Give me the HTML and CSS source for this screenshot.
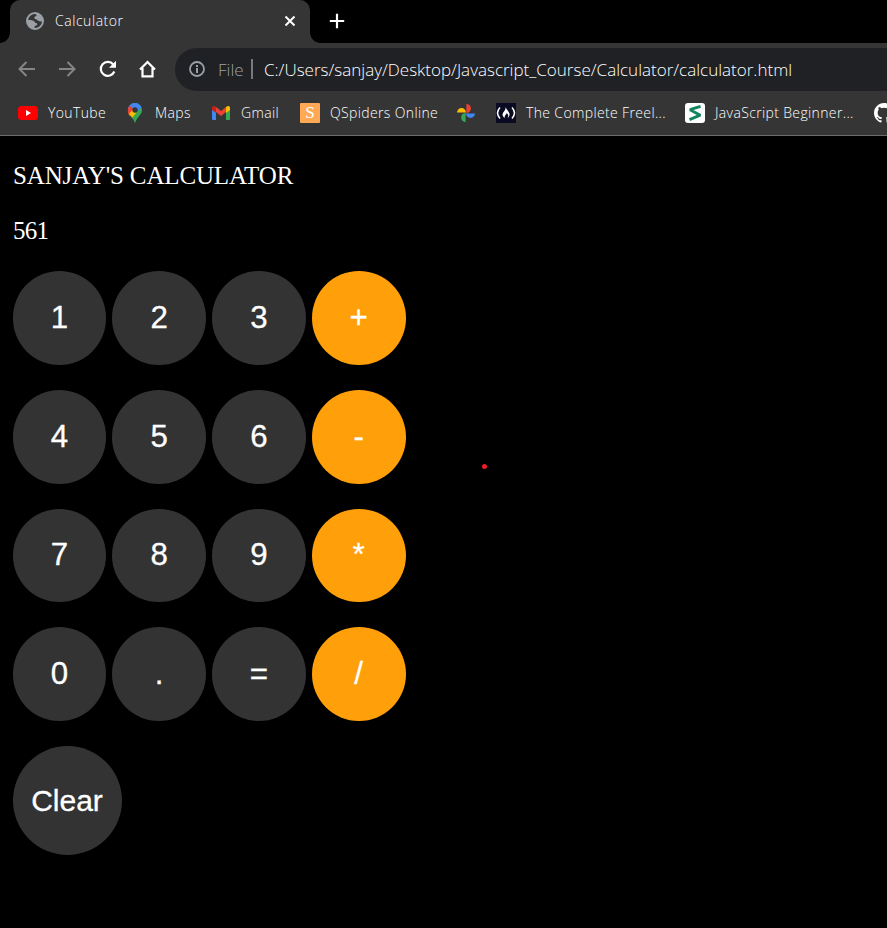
FILE: index.html
```html
<!DOCTYPE html>
<html lang="en">
<head>
<meta charset="utf-8">
<title>Calculator</title>
<link rel="stylesheet" href="styles.css">
</head>
<body>
<header class="browser">
  <div class="tabs">
    <div class="tab">
      <svg class="globe" viewBox="0 0 18 18"><circle cx="9" cy="9" r="8" fill="none" stroke="#9aa0a6" stroke-width="2"/><path d="M9 1.500C13 1.500 16.500 5 16.500 9c-1.500.8-3 .2-4.200-.2-1-.3-1.300-1.300-2.300-1.500-1.300-.2-2.200-.9-1.500-2.200.5-1 1.800-.6 2-1.600.1-.8-.9-1.200-1.500-2zM1.500 8.200c2-.4 4.500-.1 6 .6 1.600.8.9 2 2.500 2.200 1.500.2 1.700 1.600.6 2.300-.9.600-2 .5-2.100 1.700v1.600C4.500 16.500 1.500 13 1.500 8.200z" fill="#9aa0a6"/></svg>
      <span class="tab-title">Calculator</span>
      <svg class="close" viewBox="0 0 12 12"><path d="M1.500 1.500l9 9m0-9l-9 9" stroke="#fff" stroke-width="2" fill="none"/></svg>
    </div>
    <svg class="plus" viewBox="0 0 16 16"><path d="M8 .8v14.400M.8 8h14.400" stroke="#fff" stroke-width="2.200"/></svg>
  </div>
  <div class="toolbar">
    <svg class="nav" viewBox="0 0 20 20"><path d="M18 10H3M9.500 3L2.500 10l7 7" stroke="#858585" stroke-width="2" fill="none"/></svg>
    <svg class="nav" viewBox="0 0 20 20"><path d="M2 10h15M10.500 3l7 7-7 7" stroke="#858585" stroke-width="2" fill="none"/></svg>
    <svg class="nav" viewBox="0 0 20 20"><path d="M17.300 12.500A7 7 0 1 1 16.300 5.500" stroke="#fff" stroke-width="2.200" fill="none"/><path d="M19 1.800v7h-7z" fill="#fff"/></svg>
    <svg class="nav" viewBox="0 0 20 20"><path d="M3 10.500L10.500 3l7.500 7.500M5.500 9v8.400h10V9" stroke="#fff" stroke-width="2.200" fill="none"/></svg>
    <div class="address">
      <svg class="info" viewBox="0 0 16 16"><circle cx="8" cy="8" r="7" fill="none" stroke="#9aa0a6" stroke-width="1.800"/><path d="M8 7v5M8 4v2" stroke="#9aa0a6" stroke-width="2"/></svg>
      <span class="scheme">File</span>
      <span class="divider"></span>
      <span class="url">C:/Users/sanjay/Desktop/Javascript_Course/Calculator/calculator.html</span>
    </div>
  </div>
  <nav class="bookmarks">
    <div class="bm w-youtube"><svg viewBox="0 0 20 20"><rect y="3" width="20" height="14" rx="3.500" fill="#f00"/><path d="M8 7l5 3-5 3z" fill="#fff"/></svg><span>YouTube</span></div>
    <div class="bm w-maps"><svg viewBox="0 0 20 20"><path d="M10 0a7 7 0 0 1 7 7c0 5-4.500 6-7 13C8.500 15 3 12 3 7a7 7 0 0 1 7-7z" fill="#34a853"/><path d="M4.500 11.300l9-10.400A7 7 0 0 0 3 7c0 1.700.5 3 1.500 4.300z" fill="#4285f4"/><path d="M4.700 2.400L10 7l-5.500 6.200C2.300 9.500 2.200 5.500 4.700 2.400z" fill="#ea4335"/><path d="M4 10.800l4-4.600 3.500 3.500-4.300 5z" fill="#fbbc04"/><path d="M5 2.500a7 7 0 0 1 11.500 2L12 9 8 5z" fill="#4285f4"/><circle cx="10" cy="7" r="2.700" fill="#353535"/></svg><span>Maps</span></div>
    <div class="bm w-gmail"><svg viewBox="0 0 20 20"><path d="M1 5l4 3v9H2a1 1 0 0 1-1-1z" fill="#4285f4"/><path d="M19 5l-4 3v9h3a1 1 0 0 0 1-1z" fill="#34a853"/><path d="M5 4l5 4 5-4v5l-5 4-5-4z" fill="#ea4335"/><path d="M1 7V5c0-2 2-2.600 4-1v6z" fill="#c5221f"/><path d="M19 7V5c0-2-2-2.600-4-1v6z" fill="#fbbc04"/></svg><span>Gmail</span></div>
    <div class="bm w-qspiders"><b class="q-icon">S</b><span>QSpiders Online</span></div>
    <div class="bm"><svg viewBox="0 0 20 20"><path d="M10.400 1a4.500 4.500 0 0 1 0 9z" fill="#ea4335"/><path d="M19 10.400a4.500 4.500 0 0 1-9 0z" fill="#4285f4"/><path d="M9.600 19a4.500 4.500 0 0 1 0-9z" fill="#34a853"/><path d="M1 9.600a4.500 4.500 0 0 1 9 0z" fill="#fbbc04"/></svg></div>
    <div class="bm w-course"><svg viewBox="0 0 20 20"><path d="M0 0h20v20H0z" fill="#0a0a23"/><path d="M4 4.500Q-1 10 4 15.500M16 4.500q5 5.500 0 11" stroke="#fff" stroke-width="1.500" fill="none"/><path d="M9.500 4c1 3 4.500 5 4 8-.2 1.400-1 2.400-2 3 1.500-2.500.5-3.500-1-5 0 2-2.500 2.500-1.500 5-3.500-2-2.700-4.500-1-6.500C9 7 9.800 6 9.500 4z" fill="#fff"/></svg><span>The Complete Freel...</span></div>
    <div class="bm w-js"><svg viewBox="0 0 20 20"><rect width="20" height="20" rx="3" fill="#fff"/><path d="M15.500 3.300L5 6.700l10.300 5.500L4.500 16.700" stroke="#12835b" stroke-width="2.900" fill="none" stroke-linejoin="bevel"/></svg><span>JavaScript Beginner...</span></div>
    <div class="bm"><svg viewBox="0 0 16 16"><path fill="#fff" d="M8 0C3.580 0 0 3.580 0 8c0 3.540 2.290 6.530 5.470 7.590.4.070.55-.17.55-.38v-1.490c-2.010.37-2.530-.49-2.690-.94-.09-.23-.48-.94-.82-1.130-.28-.15-.68-.52-.01-.53.63-.01 1.080.58 1.230.82.72 1.210 1.870.87 2.330.66.070-.52.280-.87.510-1.070-1.780-.2-3.640-.89-3.640-3.950 0-.87.31-1.590.82-2.150-.08-.2-.36-1.020.08-2.120 0 0 .67-.21 2.200.82a7.600 7.600 0 0 1 4 0c1.530-1.040 2.200-.82 2.200-.82.44 1.100.16 1.920.08 2.120.51.56.82 1.270.82 2.150 0 3.070-1.870 3.750-3.650 3.950.29.25.54.73.54 1.480v2.200c0 .21.15.46.55.38A8 8 0 0 0 16 8c0-4.420-3.580-8-8-8z"/></svg></div>
  </nav>
</header>
<main class="page">
  <p class="heading">SANJAY'S CALCULATOR</p>
  <p class="result">561</p>
  <div class="keys">
    <button>1</button><button>2</button><button>3</button><button class="op">+</button>
    <button>4</button><button>5</button><button>6</button><button class="op">-</button>
    <button>7</button><button>8</button><button>9</button><button class="op">*</button>
    <button>0</button><button>.</button><button>=</button><button class="op">/</button>
    <button class="clear">Clear</button>
  </div>
  <i class="pointer"></i>
</main>
</body>
</html>
```
FILE: styles.css
```css
* { box-sizing: border-box; }
body { margin: 0; width: 887px; height: 928px; overflow: hidden; background: #000; color: #fff; }
svg { display: block; flex: none; }
.browser { height: 136px; background: #353535; border-bottom: 1px solid #6b6b6b; font-family: "Open Sans", "Noto Sans", sans-serif; font-size: 14px; overflow: hidden; }
.browser span { white-space: nowrap; }
.tabs { height: 43px; display: flex; background: #000; }
.tab { position: relative; margin-left: 10px; width: 300px; height: 43px; background: #353535; border-radius: 10px 10px 0 0; display: flex; align-items: center; padding: 0 14px 1px 16px; }
.tab::before, .tab::after { content: ""; position: absolute; bottom: 0; width: 10px; height: 10px; }
.tab::before { left: -10px; background: radial-gradient(circle at 0 0, transparent 9.500px, #353535 10px); }
.tab::after { left: 300px; background: radial-gradient(circle at 10px 0, transparent 9.500px, #353535 10px); }
.globe { width: 18px; height: 18px; }
.tab-title { margin: -1px 0 0 11px; font-weight: 350; letter-spacing: 0.550px; }
.close { width: 12px; height: 12px; margin-left: auto; }
.plus { width: 16px; height: 16px; margin: 13px 0 0 19px; }
.toolbar { height: 52px; display: flex; align-items: center; padding-left: 17px; gap: 20px; }
.nav { width: 20px; height: 20px; }
.address { flex: 1; height: 43px; margin-left: -2px; background: #202125; border-radius: 22px 0 0 22px; display: flex; align-items: center; padding-left: 14px; font-size: 17px; font-weight: 300; }
.info { width: 16px; height: 16px; }
.scheme { color: #9aa0a6; width: 33px; margin-left: 13px; }
.divider { width: 2px; height: 20px; background: #77797d; }
.url { margin-left: 11px; letter-spacing: 0.010px; }
.bookmarks { height: 36px; display: flex; align-items: center; gap: 20px; padding-left: 18px; }
.bm { flex: none; display: flex; align-items: center; gap: 10px; height: 20px; }
.bm svg { width: 20px; height: 20px; }
.bm span { margin-top: -2px; font-weight: 350; letter-spacing: 0.360px; }
.w-youtube { width: 87px; }
.w-maps { width: 66px; }
.w-gmail { width: 69px; }
.w-qspiders { width: 136px; }
.w-course, .w-js { width: 169px; }
.q-icon { flex: none; width: 20px; height: 20px; border-radius: 1px; background: #ffa954; color: #fff; font: 17px/20px "Liberation Serif", serif; text-align: center; }
.page { position: relative; padding: 25px 0 0 12.500px; font-family: "Liberation Serif", serif; font-size: 25px; line-height: 29px; }
.heading, .result { margin: 0 0 26px 0.500px; letter-spacing: -0.150px; }
.result { letter-spacing: -0.700px; }
.keys { display: grid; grid-template-columns: repeat(4, 93.750px); gap: 25px 6px; }
button { width: 93.750px; height: 93.750px; padding: 0; border: 0; border-radius: 50%; background: #333; color: #fff; font: 31.250px "Liberation Sans", sans-serif; -webkit-text-stroke: 0.300px #fff; }
.op { background: #ff9f0a; }
.clear { width: 109px; height: 109px; font-size: 30px; }
.pointer { position: absolute; left: 482px; top: 328px; width: 5px; height: 5px; border-radius: 50%; background: #ed1c24; }
```
